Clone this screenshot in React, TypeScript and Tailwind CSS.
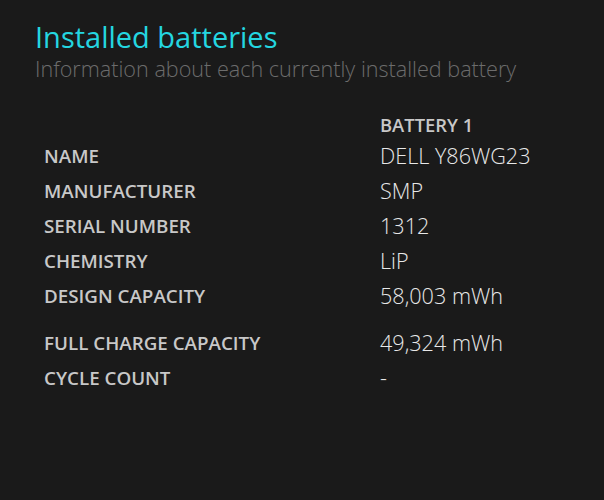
import React from "react";

const rows: { label: string; value: string; extra?: boolean }[] = [
  { label: "NAME", value: "DELL Y86WG23" },
  { label: "MANUFACTURER", value: "SMP" },
  { label: "SERIAL NUMBER", value: "1312" },
  { label: "CHEMISTRY", value: "LiP" },
  { label: "DESIGN CAPACITY", value: "58,003 mWh" },
  { label: "FULL CHARGE CAPACITY", value: "49,324 mWh", extra: true },
  { label: "CYCLE COUNT", value: "-" },
];

export default function App() {
  return (
    <div
      className="w-[604px] h-[500px] bg-[#1a1a1a] overflow-hidden"
      style={{ fontFamily: '"Open Sans", "Noto Sans", sans-serif' }}
    >
      <div className="pl-[35px] pt-[19px]">
        <h1 className="text-[29px] leading-[36px] font-normal text-[#24d6e0]">Installed batteries</h1>
        <p className="text-[21.6px] leading-[28px] font-light text-[#6c6c6c]">
          Information about each currently installed battery
        </p>
      </div>
      <div className="pl-[44px] mt-[27px]">
        <div className="flex h-[29px] items-center">
          <div className="w-[336px]" />
          <div className="text-[18.4px] font-semibold text-[#c8c8c8]">BATTERY 1</div>
        </div>
        {rows.map((r) => (
          <div
            key={r.label}
            className={`flex h-[35px] items-center ${r.extra ? "mt-[12px]" : ""}`}
          >
            <div className="w-[336px] text-[18.8px] font-semibold text-[#c8c8c8]">{r.label}</div>
            <div className="text-[21.6px] font-light text-[#e8e8e8]">{r.value}</div>
          </div>
        ))}
      </div>
    </div>
  );
}
